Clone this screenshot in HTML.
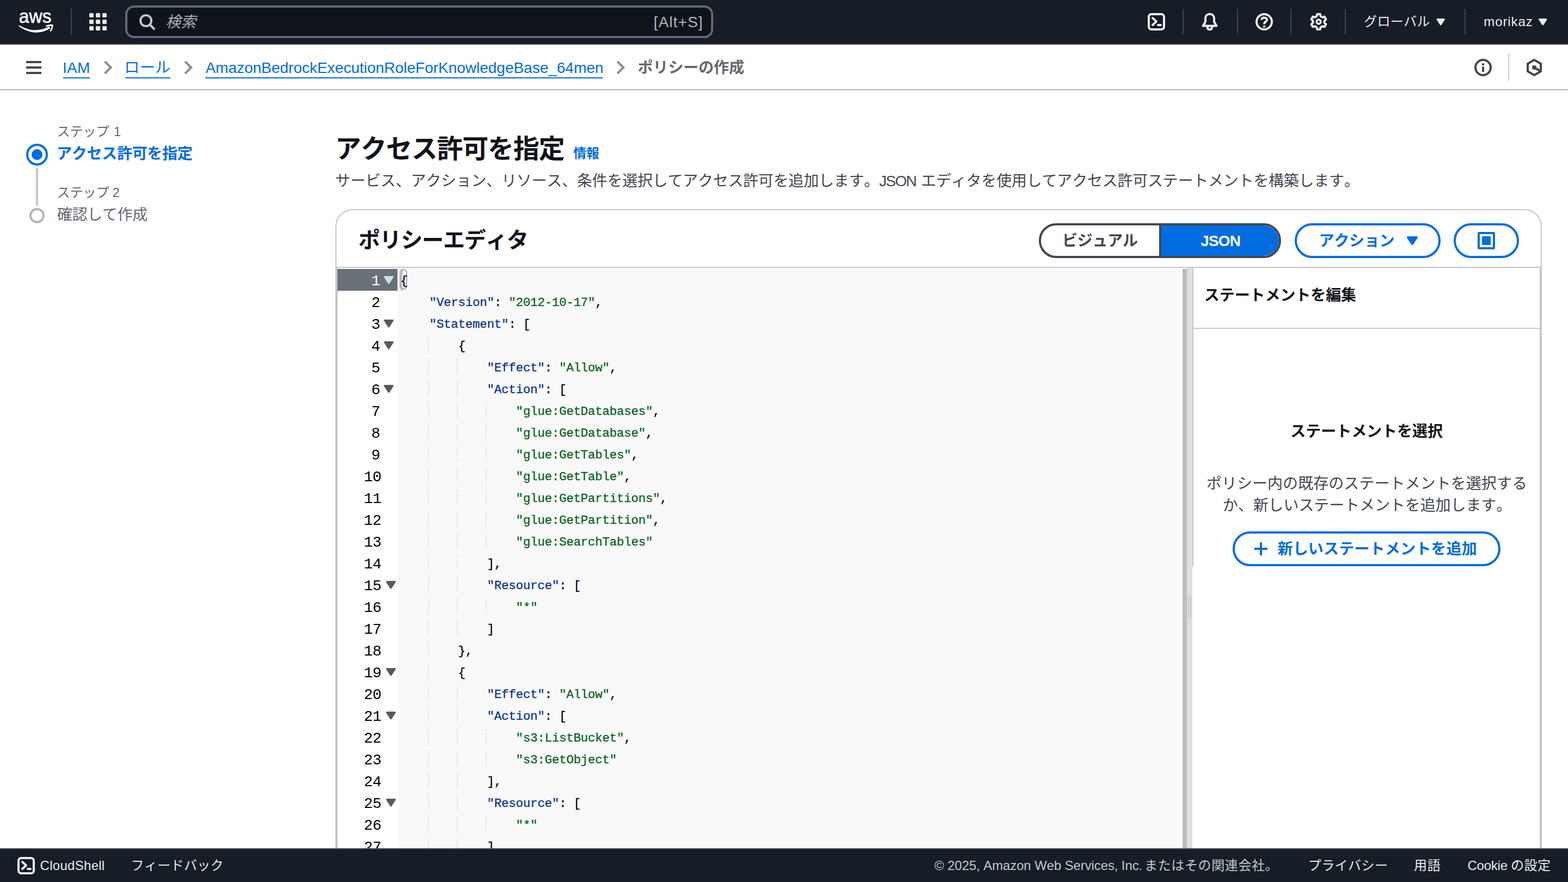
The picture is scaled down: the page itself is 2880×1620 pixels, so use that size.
<!DOCTYPE html>
<html lang="ja"><head><meta charset="utf-8"><title>IAM - ポリシーの作成</title>
<style>
html,body{margin:0;padding:0;background:#fff;overflow:hidden}
html{width:2880px;height:1620px}
body{width:2880px;height:1620px;position:relative;overflow:hidden;font-family:"Liberation Sans","Noto Sans CJK JP",sans-serif;font-kerning:none;-webkit-font-smoothing:antialiased}
div,span{position:absolute;box-sizing:border-box;white-space:pre}
svg.ov{position:absolute;left:0;top:0;width:2880px;height:1620px;overflow:hidden}
svg.ov text{font-family:"Liberation Sans","Noto Sans CJK JP",sans-serif;white-space:pre;font-kerning:none}

.ig{width:2px;height:28px;background:repeating-linear-gradient(to bottom,#d8d8c8 0 2px,transparent 2px 4px)}
svg.ov .cl{font-family:"Liberation Mono",monospace;font-size:22.5px;fill:#000;stroke:#000;stroke-width:.3px}
svg.ov .cl .k{fill:#08318e;stroke:#08318e} svg.ov .cl .s{fill:#06611a;stroke:#06611a}
svg.ov .ln{font-family:"Liberation Mono",monospace;font-size:27.5px;fill:#000}

</style></head><body>
<div style="left:0px;top:0px;width:2880px;height:82px;background:#161d26;border-bottom:2px solid #424650"></div>
<div style="left:130px;top:16px;width:2px;height:48px;background:#424650"></div>
<div style="left:230px;top:10px;width:1080px;height:60px;background:#0f141a;border:4px solid #656871;border-radius:16px"></div>
<div style="left:2172px;top:17px;width:2px;height:46px;background:#424650"></div>
<div style="left:2272px;top:17px;width:2px;height:46px;background:#424650"></div>
<div style="left:2370px;top:17px;width:2px;height:46px;background:#424650"></div>
<div style="left:2470px;top:17px;width:2px;height:46px;background:#424650"></div>
<div style="left:2690px;top:17px;width:2px;height:46px;background:#424650"></div>
<div style="left:0px;top:82px;width:2880px;height:84px;background:#fff;border-bottom:2px solid #b9b9c1"></div>
<div style="left:48px;top:112px;width:28px;height:4px;background:#424650"></div>
<div style="left:48px;top:122px;width:28px;height:4px;background:#424650"></div>
<div style="left:48px;top:132px;width:28px;height:4px;background:#424650"></div>
<div style="left:116px;top:142px;width:49px;height:2px;background:#006ce0"></div>
<div style="left:230px;top:142px;width:83px;height:2px;background:#006ce0"></div>
<div style="left:377px;top:142px;width:730px;height:2px;background:#006ce0"></div>
<div style="left:2770px;top:98px;width:2px;height:50px;background:#c6c6cd"></div>
<div style="left:66px;top:308px;width:4px;height:70px;background:#c6c6cd"></div>
<div style="left:616px;top:384px;width:2216px;height:1236px;background:#fff;border:2px solid #c6c6cd;border-radius:32px"></div>
<div style="left:1908px;top:410px;width:445px;height:64px;background:#fff;border:4px solid #424650;border-radius:32px;overflow:hidden"><div style="left:217px;top:-4px;width:226px;height:64px;background:#006ce0;border-left:4px solid #424650"></div></div>
<div style="left:2378px;top:410px;width:268px;height:64px;background:#fff;border:4px solid #006ce0;border-radius:32px"></div>
<div style="left:2670px;top:410px;width:120px;height:64px;background:#fff;border:4px solid #006ce0;border-radius:32px"></div>
<div style="left:618px;top:490px;width:2212px;height:2px;background:#c6c6cd"></div>
<div style="left:616px;top:492px;width:4px;height:1100px;background:#c3c3cb"></div>
<div style="left:2828px;top:492px;width:4px;height:1100px;background:#c6c6cd"></div>
<div style="left:620px;top:494px;width:110px;height:1100px;background:#fff"></div>
<div style="left:730px;top:494px;width:1442px;height:1100px;background:#f9f9fa"></div>
<div style="left:2172px;top:494px;width:8px;height:1100px;background:#bdbdbd"></div>
<div style="left:2180px;top:492px;width:10px;height:1100px;background:#dedee3"></div>
<div style="left:2182px;top:1094px;width:2px;height:40px;background:#c6c6cd"></div>
<div style="left:2186px;top:1094px;width:2px;height:40px;background:#c6c6cd"></div>
<div style="left:620px;top:494px;width:110px;height:40px;background:#687078"></div>
<div class="ig" style="left:786px;top:620px"></div>
<div class="ig" style="left:786px;top:660px"></div>
<div class="ig" style="left:839px;top:660px"></div>
<div class="ig" style="left:786px;top:700px"></div>
<div class="ig" style="left:839px;top:700px"></div>
<div class="ig" style="left:786px;top:740px"></div>
<div class="ig" style="left:839px;top:740px"></div>
<div class="ig" style="left:892px;top:740px"></div>
<div class="ig" style="left:786px;top:780px"></div>
<div class="ig" style="left:839px;top:780px"></div>
<div class="ig" style="left:892px;top:780px"></div>
<div class="ig" style="left:786px;top:820px"></div>
<div class="ig" style="left:839px;top:820px"></div>
<div class="ig" style="left:892px;top:820px"></div>
<div class="ig" style="left:786px;top:860px"></div>
<div class="ig" style="left:839px;top:860px"></div>
<div class="ig" style="left:892px;top:860px"></div>
<div class="ig" style="left:786px;top:900px"></div>
<div class="ig" style="left:839px;top:900px"></div>
<div class="ig" style="left:892px;top:900px"></div>
<div class="ig" style="left:786px;top:940px"></div>
<div class="ig" style="left:839px;top:940px"></div>
<div class="ig" style="left:892px;top:940px"></div>
<div class="ig" style="left:786px;top:980px"></div>
<div class="ig" style="left:839px;top:980px"></div>
<div class="ig" style="left:892px;top:980px"></div>
<div class="ig" style="left:786px;top:1020px"></div>
<div class="ig" style="left:839px;top:1020px"></div>
<div class="ig" style="left:786px;top:1060px"></div>
<div class="ig" style="left:839px;top:1060px"></div>
<div class="ig" style="left:786px;top:1100px"></div>
<div class="ig" style="left:839px;top:1100px"></div>
<div class="ig" style="left:892px;top:1100px"></div>
<div class="ig" style="left:786px;top:1140px"></div>
<div class="ig" style="left:839px;top:1140px"></div>
<div class="ig" style="left:786px;top:1180px"></div>
<div class="ig" style="left:786px;top:1220px"></div>
<div class="ig" style="left:786px;top:1260px"></div>
<div class="ig" style="left:839px;top:1260px"></div>
<div class="ig" style="left:786px;top:1300px"></div>
<div class="ig" style="left:839px;top:1300px"></div>
<div class="ig" style="left:786px;top:1340px"></div>
<div class="ig" style="left:839px;top:1340px"></div>
<div class="ig" style="left:892px;top:1340px"></div>
<div class="ig" style="left:786px;top:1380px"></div>
<div class="ig" style="left:839px;top:1380px"></div>
<div class="ig" style="left:892px;top:1380px"></div>
<div class="ig" style="left:786px;top:1420px"></div>
<div class="ig" style="left:839px;top:1420px"></div>
<div class="ig" style="left:786px;top:1460px"></div>
<div class="ig" style="left:839px;top:1460px"></div>
<div class="ig" style="left:786px;top:1500px"></div>
<div class="ig" style="left:839px;top:1500px"></div>
<div class="ig" style="left:892px;top:1500px"></div>
<div class="ig" style="left:786px;top:1540px"></div>
<div class="ig" style="left:839px;top:1540px"></div>
<div style="left:736px;top:494px;width:4px;height:40px;background:rgba(120,120,120,.38)"></div>
<div style="left:734px;top:494px;width:14px;height:38px;border:2px solid #a6a6c8;border-radius:7px"></div>
<div style="left:2190px;top:492px;width:638px;height:1100px;background:#fff"></div>
<div style="left:2190px;top:492px;width:2px;height:548px;background:#c6c6cd"></div>
<div style="left:2192px;top:602px;width:636px;height:2px;background:#c6c6cd"></div>
<div style="left:2264px;top:976px;width:492px;height:64px;background:#fff;border:4px solid #006ce0;border-radius:32px"></div>
<div style="left:0px;top:1558px;width:2880px;height:62px;background:#161d26;border-top:2px solid #424650"></div>
<svg class="ov" viewBox="0 0 2880 1620">
<g aria-label="aws">
<text x="34.8" y="41.7" font-family="Liberation Sans, sans-serif" font-size="35.8" fill="#fff" stroke="#fff" stroke-width="0.6" textLength="59.6" lengthAdjust="spacingAndGlyphs" style="font-kerning:none">aws</text>
<path d="M33.6 47.6 C45 56.5 59 59.9 66 59.8 C76 59.7 86 56.4 92.3 52 L90.4 48.6 C84 52.2 75 55.2 65.5 55.2 C55 55.2 44 51.6 35 46.4 Z" fill="#fff"/>
<path d="M85.4 47.8 C89 46.6 93 46 96.3 46.2 C96.2 49.6 95 53.4 92.9 56.4" fill="none" stroke="#fff" stroke-width="2.6" stroke-linejoin="round" stroke-linecap="round"/>
</g>
<g><rect x="164" y="24" width="8" height="8" rx="1.8" fill="#ebebf0"/><rect x="176" y="24" width="8" height="8" rx="1.8" fill="#ebebf0"/><rect x="188" y="24" width="8" height="8" rx="1.8" fill="#ebebf0"/><rect x="164" y="36" width="8" height="8" rx="1.8" fill="#ebebf0"/><rect x="176" y="36" width="8" height="8" rx="1.8" fill="#ebebf0"/><rect x="188" y="36" width="8" height="8" rx="1.8" fill="#ebebf0"/><rect x="164" y="48" width="8" height="8" rx="1.8" fill="#ebebf0"/><rect x="176" y="48" width="8" height="8" rx="1.8" fill="#ebebf0"/><rect x="188" y="48" width="8" height="8" rx="1.8" fill="#ebebf0"/></g>
<g fill="none" stroke="#c6c6cd" stroke-width="4" stroke-linecap="butt"><circle cx="268" cy="38" r="10"/><path d="M275.5 45.5 L284 54"/></g>
<text x="304.2" y="49.8" font-size="28" font-style="italic" fill="#adadb6" textLength="56" lengthAdjust="spacing">検索</text>
<text x="1200.6 1209.49 1229.27 1236.59 1245.48 1262.94 1282.72" y="50.20" font-size="28" fill="#b4b4bb">[Alt+S]</text>
<g fill="none" stroke="#ebebf0" stroke-width="4" stroke-linejoin="round" stroke-linecap="round"><rect x="2110" y="26" width="28" height="28" rx="5"/><path d="M2117 33 L2124 39.5 L2117 46"/><path d="M2127 46 H2132"/></g>
<g fill="none" stroke="#ebebf0" stroke-width="4" stroke-linejoin="round" stroke-linecap="round"><path d="M2209.5 47.5 L2214 40 V34 C2214 29 2217.5 25.7 2222 25.7 C2226.5 25.7 2230 29 2230 34 V40 L2234.5 47.5 Z"/><path d="M2217.8 49.8 C2218 53 2220 54.2 2222 54.2 C2224 54.2 2226 53 2226.2 49.8"/></g>
<g fill="none" stroke="#ebebf0" stroke-width="4" stroke-linejoin="round"><circle cx="2322" cy="40" r="14"/><path d="M2317.3 36.4 C2317.3 33.8 2319.2 32.5 2322 32.5 C2325.2 32.5 2327 34.2 2327 36.4 C2327 39.6 2322 39.8 2322 44.6"/><path d="M2319.8 48.6 H2324.4" stroke-width="3"/></g>
<g fill="none" stroke="#ebebf0" stroke-width="4" stroke-linejoin="round"><path d="M2418.4 29.8 L2419.2 26.1 L2424.8 26.1 L2425.6 29.8 L2429.0 31.8 L2432.6 30.6 L2435.5 35.5 L2432.6 38.0 L2432.6 42.0 L2435.5 44.5 L2432.6 49.4 L2429.0 48.2 L2425.6 50.2 L2424.8 53.9 L2419.2 53.9 L2418.4 50.2 L2415.0 48.2 L2411.4 49.4 L2408.5 44.5 L2411.4 42.0 L2411.4 38.0 L2408.5 35.5 L2411.4 30.6 L2415.0 31.8Z"/><circle cx="2422" cy="40" r="3.9" stroke-width="3.5"/></g>
<text x="2505.1" y="48" font-size="24" fill="#ebebf0" textLength="121.5" lengthAdjust="spacing">グローバル</text>
<path d="M2640 35.5 H2652.4 L2646.2 44.8 Z" fill="#ebebf0" stroke="#ebebf0" stroke-width="3.1" stroke-linejoin="round"/>
<text x="2725.21 2746.13 2760.41 2769.33 2775.59 2788.52 2802.8" y="47.60" font-size="24" fill="#ebebf0">morikaz</text>
<path d="M2827.6 35.5 H2840.0 L2833.7999999999997 44.8 Z" fill="#ebebf0" stroke="#ebebf0" stroke-width="3.1" stroke-linejoin="round"/>
<text x="115.02 123.05 141.97" y="134.00" font-size="28" fill="#006ce0">IAM</text>
<path d="M192.5 113 L203.5 124 L192.5 135" fill="none" stroke="#8c8c94" stroke-width="4"/>
<text x="228.2" y="134" font-size="28" fill="#006ce0" textLength="84.9" lengthAdjust="spacing">ロール</text>
<path d="M340 113 L351 124 L340 135" fill="none" stroke="#8c8c94" stroke-width="4"/>
<text x="377.45 396.11 419.42 434.97 448.96 464.52 480.08 498.74 514.3 529.85 539.16 554.72 568.71 582.69 601.36 615.34 630.9 644.89 660.44 668.21 674.41 689.97 705.53 725.74 741.3 747.5 763.06 780.15 795.71 805.02 823.68 839.24 854.8 875 881.21 896.77 912.32 927.88 943.44 962.1 977.66 991.65 1007.2 1022.76 1038.32 1053.88 1077.19 1092.75" y="134.00" font-size="28" fill="#006ce0">AmazonBedrockExecutionRoleForKnowledgeBase_64men</text>
<path d="M1134 113 L1145 124 L1134 135" fill="none" stroke="#8c8c94" stroke-width="4"/>
<text x="1171.3" y="134" font-size="28" font-weight="700" fill="#656871" textLength="195.6" lengthAdjust="spacing">ポリシーの作成</text>
<g fill="none" stroke="#424650" stroke-width="4"><circle cx="2724" cy="124" r="14"/><path d="M2724 116.3 V120 M2724 122.3 V132"/></g>
<g fill="none" stroke="#424650" stroke-width="4" stroke-linejoin="round"><path d="M2818 110 L2830 117 V131 L2818 138 L2806 131 V117 Z"/><path d="M2818 124 L2830 131"/><circle cx="2818" cy="124" r="4" fill="#424650" stroke="none"/></g>
<text x="104.5" y="250" font-size="24" fill="#656871" textLength="96.1" lengthAdjust="spacing">ステップ</text>
<text x="208.77" y="250.00" font-size="24" fill="#656871">1</text>
<circle cx="68" cy="284" r="18" fill="#fff" stroke="#006ce0" stroke-width="4"/><circle cx="68" cy="284" r="10" fill="#006ce0"/>
<text x="104.1" y="292" font-size="28" font-weight="700" fill="#006ce0" textLength="249.7" lengthAdjust="spacing">アクセス許可を指定</text>
<text x="104.5" y="362" font-size="24" fill="#656871" textLength="96.1" lengthAdjust="spacing">ステップ</text>
<text x="206.59" y="362.00" font-size="24" fill="#656871">2</text>
<circle cx="68" cy="396" r="12" fill="#fff" stroke="#b4b4bb" stroke-width="4"/>
<text x="104.8" y="404" font-size="28" fill="#656871" textLength="166.4" lengthAdjust="spacing">確認して作成</text>
<text x="615.6" y="289.6" font-size="48" font-weight="700" fill="#0f141a" textLength="421.9" lengthAdjust="spacing">アクセス許可を指定</text>
<text x="1053" y="290" font-size="24" font-weight="700" fill="#006ce0" textLength="47.7" lengthAdjust="spacing">情報</text>
<text x="615.8" y="341.5" font-size="28" fill="#424650" textLength="999.2" lengthAdjust="spacing">サービス、アクション、リソース、条件を選択してアクセス許可を追加します。</text>
<text x="1614.86 1627.11 1644.03 1664.06" y="342.20" font-size="28" fill="#424650">JSON</text>
<text x="1691.5" y="341.5" font-size="28" fill="#424650" textLength="805.4" lengthAdjust="spacing">エディタを使用してアクセス許可ステートメントを構築します。</text>
<text x="658.3" y="455" font-size="40" font-weight="700" fill="#0f141a" textLength="312.4" lengthAdjust="spacing">ポリシーエディタ</text>
<text x="1950.9" y="452" font-size="28" font-weight="700" fill="#424650" textLength="139.2" lengthAdjust="spacing">ビジュアル</text>
<text x="2205.28 2220 2237.83 2258.77" y="452.00" font-size="28" fill="#fff" font-weight="700">JSON</text>
<text x="2422.5" y="452" font-size="28" font-weight="700" fill="#006ce0" textLength="139.1" lengthAdjust="spacing">アクション</text>
<path d="M2586 436 H2602 L2594.0 448 Z" fill="#006ce0" stroke="#006ce0" stroke-width="4" stroke-linejoin="round"/>
<rect x="2716" y="428" width="28" height="28" rx="1" fill="none" stroke="#006ce0" stroke-width="4"/><rect x="2722" y="434" width="16" height="16" rx="1" fill="#006ce0"/>
<text class="cl" x="735.5" y="522">{</text>
<text class="ln" x="681.95" y="523.8" style="fill:#fff">1</text>
<path d="M706.5 508.5 H721.5 L714 520 Z" fill="#d5dbdb" stroke="#d5dbdb" stroke-width="3" stroke-linejoin="round"/>
<text class="cl" x="788.48 801.73 814.97 828.22 841.46 854.71 867.95 881.19 894.44 907.68 920.93 934.17 947.42 960.66 973.91 987.15 1000.4 1013.64 1026.89 1040.13 1053.38 1066.62 1079.87 1093.12" y="562"><tspan class="k">"Version"</tspan>: <tspan class="s">"2012-10-17"</tspan>,</text>
<text class="ln" x="681.95" y="563.8" style="fill:#000">2</text>
<text class="cl" x="788.48 801.73 814.97 828.22 841.46 854.71 867.95 881.19 894.44 907.68 920.93 934.17 947.42 960.66" y="602"><tspan class="k">"Statement"</tspan>: [</text>
<text class="ln" x="681.95" y="603.8" style="fill:#000">3</text>
<path d="M706.5 588.5 H721.5 L714 600 Z" fill="#545b64" stroke="#545b64" stroke-width="3" stroke-linejoin="round"/>
<text class="cl" x="841.46" y="642">{</text>
<text class="ln" x="681.95" y="643.8" style="fill:#000">4</text>
<path d="M706.5 628.5 H721.5 L714 640 Z" fill="#545b64" stroke="#545b64" stroke-width="3" stroke-linejoin="round"/>
<text class="cl" x="894.44 907.68 920.93 934.17 947.42 960.66 973.91 987.15 1000.4 1013.64 1026.89 1040.13 1053.38 1066.62 1079.87 1093.12 1106.36 1119.61" y="682"><tspan class="k">"Effect"</tspan>: <tspan class="s">"Allow"</tspan>,</text>
<text class="ln" x="681.95" y="683.8" style="fill:#000">5</text>
<text class="cl" x="894.44 907.68 920.93 934.17 947.42 960.66 973.91 987.15 1000.4 1013.64 1026.89" y="722"><tspan class="k">"Action"</tspan>: [</text>
<text class="ln" x="681.95" y="723.8" style="fill:#000">6</text>
<path d="M706.5 708.5 H721.5 L714 720 Z" fill="#545b64" stroke="#545b64" stroke-width="3" stroke-linejoin="round"/>
<text class="cl" x="947.42 960.66 973.91 987.15 1000.4 1013.64 1026.89 1040.13 1053.38 1066.62 1079.87 1093.12 1106.36 1119.61 1132.85 1146.1 1159.34 1172.59 1185.83 1199.08" y="762"><tspan class="s">"glue:GetDatabases"</tspan>,</text>
<text class="ln" x="681.95" y="763.8" style="fill:#000">7</text>
<text class="cl" x="947.42 960.66 973.91 987.15 1000.4 1013.64 1026.89 1040.13 1053.38 1066.62 1079.87 1093.12 1106.36 1119.61 1132.85 1146.1 1159.34 1172.59 1185.83" y="802"><tspan class="s">"glue:GetDatabase"</tspan>,</text>
<text class="ln" x="681.95" y="803.8" style="fill:#000">8</text>
<text class="cl" x="947.42 960.66 973.91 987.15 1000.4 1013.64 1026.89 1040.13 1053.38 1066.62 1079.87 1093.12 1106.36 1119.61 1132.85 1146.1 1159.34" y="842"><tspan class="s">"glue:GetTables"</tspan>,</text>
<text class="ln" x="681.95" y="843.8" style="fill:#000">9</text>
<text class="cl" x="947.42 960.66 973.91 987.15 1000.4 1013.64 1026.89 1040.13 1053.38 1066.62 1079.87 1093.12 1106.36 1119.61 1132.85 1146.1" y="882"><tspan class="s">"glue:GetTable"</tspan>,</text>
<text class="ln" x="668.15 684.35" y="883.8" style="fill:#000">10</text>
<text class="cl" x="947.42 960.66 973.91 987.15 1000.4 1013.64 1026.89 1040.13 1053.38 1066.62 1079.87 1093.12 1106.36 1119.61 1132.85 1146.1 1159.34 1172.59 1185.83 1199.08 1212.32" y="922"><tspan class="s">"glue:GetPartitions"</tspan>,</text>
<text class="ln" x="668.15 684.35" y="923.8" style="fill:#000">11</text>
<text class="cl" x="947.42 960.66 973.91 987.15 1000.4 1013.64 1026.89 1040.13 1053.38 1066.62 1079.87 1093.12 1106.36 1119.61 1132.85 1146.1 1159.34 1172.59 1185.83 1199.08" y="962"><tspan class="s">"glue:GetPartition"</tspan>,</text>
<text class="ln" x="668.15 684.35" y="963.8" style="fill:#000">12</text>
<text class="cl" x="947.42 960.66 973.91 987.15 1000.4 1013.64 1026.89 1040.13 1053.38 1066.62 1079.87 1093.12 1106.36 1119.61 1132.85 1146.1 1159.34 1172.59 1185.83" y="1002"><tspan class="s">"glue:SearchTables"</tspan></text>
<text class="ln" x="668.15 684.35" y="1003.8" style="fill:#000">13</text>
<text class="cl" x="894.44 907.68" y="1042">],</text>
<text class="ln" x="668.15 684.35" y="1043.8" style="fill:#000">14</text>
<text class="cl" x="894.44 907.68 920.93 934.17 947.42 960.66 973.91 987.15 1000.4 1013.64 1026.89 1040.13 1053.38" y="1082"><tspan class="k">"Resource"</tspan>: [</text>
<text class="ln" x="668.15 684.35" y="1083.8" style="fill:#000">15</text>
<path d="M710.5 1068.5 H725.5 L718 1080 Z" fill="#545b64" stroke="#545b64" stroke-width="3" stroke-linejoin="round"/>
<text class="cl" x="947.42 960.66 973.91" y="1122"><tspan class="s">"*"</tspan></text>
<text class="ln" x="668.15 684.35" y="1123.8" style="fill:#000">16</text>
<text class="cl" x="894.44" y="1162">]</text>
<text class="ln" x="668.15 684.35" y="1163.8" style="fill:#000">17</text>
<text class="cl" x="841.46 854.71" y="1202">},</text>
<text class="ln" x="668.15 684.35" y="1203.8" style="fill:#000">18</text>
<text class="cl" x="841.46" y="1242">{</text>
<text class="ln" x="668.15 684.35" y="1243.8" style="fill:#000">19</text>
<path d="M710.5 1228.5 H725.5 L718 1240 Z" fill="#545b64" stroke="#545b64" stroke-width="3" stroke-linejoin="round"/>
<text class="cl" x="894.44 907.68 920.93 934.17 947.42 960.66 973.91 987.15 1000.4 1013.64 1026.89 1040.13 1053.38 1066.62 1079.87 1093.12 1106.36 1119.61" y="1282"><tspan class="k">"Effect"</tspan>: <tspan class="s">"Allow"</tspan>,</text>
<text class="ln" x="668.15 684.35" y="1283.8" style="fill:#000">20</text>
<text class="cl" x="894.44 907.68 920.93 934.17 947.42 960.66 973.91 987.15 1000.4 1013.64 1026.89" y="1322"><tspan class="k">"Action"</tspan>: [</text>
<text class="ln" x="668.15 684.35" y="1323.8" style="fill:#000">21</text>
<path d="M710.5 1308.5 H725.5 L718 1320 Z" fill="#545b64" stroke="#545b64" stroke-width="3" stroke-linejoin="round"/>
<text class="cl" x="947.42 960.66 973.91 987.15 1000.4 1013.64 1026.89 1040.13 1053.38 1066.62 1079.87 1093.12 1106.36 1119.61 1132.85 1146.1" y="1362"><tspan class="s">"s3:ListBucket"</tspan>,</text>
<text class="ln" x="668.15 684.35" y="1363.8" style="fill:#000">22</text>
<text class="cl" x="947.42 960.66 973.91 987.15 1000.4 1013.64 1026.89 1040.13 1053.38 1066.62 1079.87 1093.12 1106.36 1119.61" y="1402"><tspan class="s">"s3:GetObject"</tspan></text>
<text class="ln" x="668.15 684.35" y="1403.8" style="fill:#000">23</text>
<text class="cl" x="894.44 907.68" y="1442">],</text>
<text class="ln" x="668.15 684.35" y="1443.8" style="fill:#000">24</text>
<text class="cl" x="894.44 907.68 920.93 934.17 947.42 960.66 973.91 987.15 1000.4 1013.64 1026.89 1040.13 1053.38" y="1482"><tspan class="k">"Resource"</tspan>: [</text>
<text class="ln" x="668.15 684.35" y="1483.8" style="fill:#000">25</text>
<path d="M710.5 1468.5 H725.5 L718 1480 Z" fill="#545b64" stroke="#545b64" stroke-width="3" stroke-linejoin="round"/>
<text class="cl" x="947.42 960.66 973.91" y="1522"><tspan class="s">"*"</tspan></text>
<text class="ln" x="668.15 684.35" y="1523.8" style="fill:#000">26</text>
<text class="cl" x="894.44" y="1562">]</text>
<text class="ln" x="668.15 684.35" y="1563.8" style="fill:#000">27</text>
<text x="2211.8" y="552" font-size="28" font-weight="700" fill="#0f141a" textLength="279.3" lengthAdjust="spacing">ステートメントを編集</text>
<text x="2370.3" y="802" font-size="28" font-weight="700" fill="#0f141a" textLength="279.7" lengthAdjust="spacing">ステートメントを選択</text>
<text x="2215.8" y="898" font-size="28" fill="#424650" textLength="589.2" lengthAdjust="spacing">ポリシー内の既存のステートメントを選択する</text>
<text x="2245.8" y="938" font-size="28" fill="#424650" textLength="530.5" lengthAdjust="spacing">か、新しいステートメントを追加します。</text>
<path d="M2304 1008 H2328 M2316 996 V1020" stroke="#006ce0" stroke-width="4" fill="none"/>
<text x="2346.5" y="1018" font-size="28" font-weight="700" fill="#006ce0" textLength="366.2" lengthAdjust="spacing">新しいステートメントを追加</text>
<rect x="0" y="1558" width="2880" height="62" fill="#161d26"/><rect x="0" y="1558" width="2880" height="2" fill="#424650"/>
<g fill="none" stroke="#ebebf0" stroke-width="4" stroke-linejoin="round" stroke-linecap="round"><rect x="34" y="1576" width="28" height="28" rx="5"/><path d="M41 1583 L48 1589.5 L41 1596"/><path d="M51 1596 H56"/></g>
<text x="73.58 91.2 96.81 110.44 124.07 137.7 154 167.63 181.26 186.87" y="1597.70" font-size="24" fill="#ebebf0">CloudShell</text>
<text x="240.5" y="1598" font-size="24" fill="#ebebf0" textLength="170.1" lengthAdjust="spacing">フィードバック</text>
<text x="1716.14 1733.7 1740.25 1753.48 1766.71 1779.94 1793.17 1799.72 1806.27 1822.15 1842.03 1855.26 1867.14 1880.37 1893.6 1900.15 1922.68 1935.91 1949.14 1955.69 1971.58 1984.81 1992.68 2004.56 2009.77 2021.65 2034.88 2046.77 2053.31 2059.86 2066.41 2079.64 2091.52" y="1597.70" font-size="24" fill="#c6c6cd">© 2025, Amazon Web Services, Inc.</text>
<text x="2102.1" y="1598" font-size="24" fill="#c6c6cd" textLength="245.5" lengthAdjust="spacing">またはその関連会社。</text>
<text x="2402.7" y="1598" font-size="24" fill="#ebebf0" textLength="146.2" lengthAdjust="spacing">プライバシー</text>
<text x="2596.9" y="1598" font-size="24" fill="#ebebf0" textLength="48.9" lengthAdjust="spacing">用語</text>
<text x="2695.38 2712.51 2725.65 2738.8 2750.59 2755.72" y="1597.70" font-size="24" fill="#ebebf0">Cookie</text>
<text x="2774.9" y="1598" font-size="24" fill="#ebebf0" textLength="73.1" lengthAdjust="spacing">の設定</text>
</svg>
</body></html>
